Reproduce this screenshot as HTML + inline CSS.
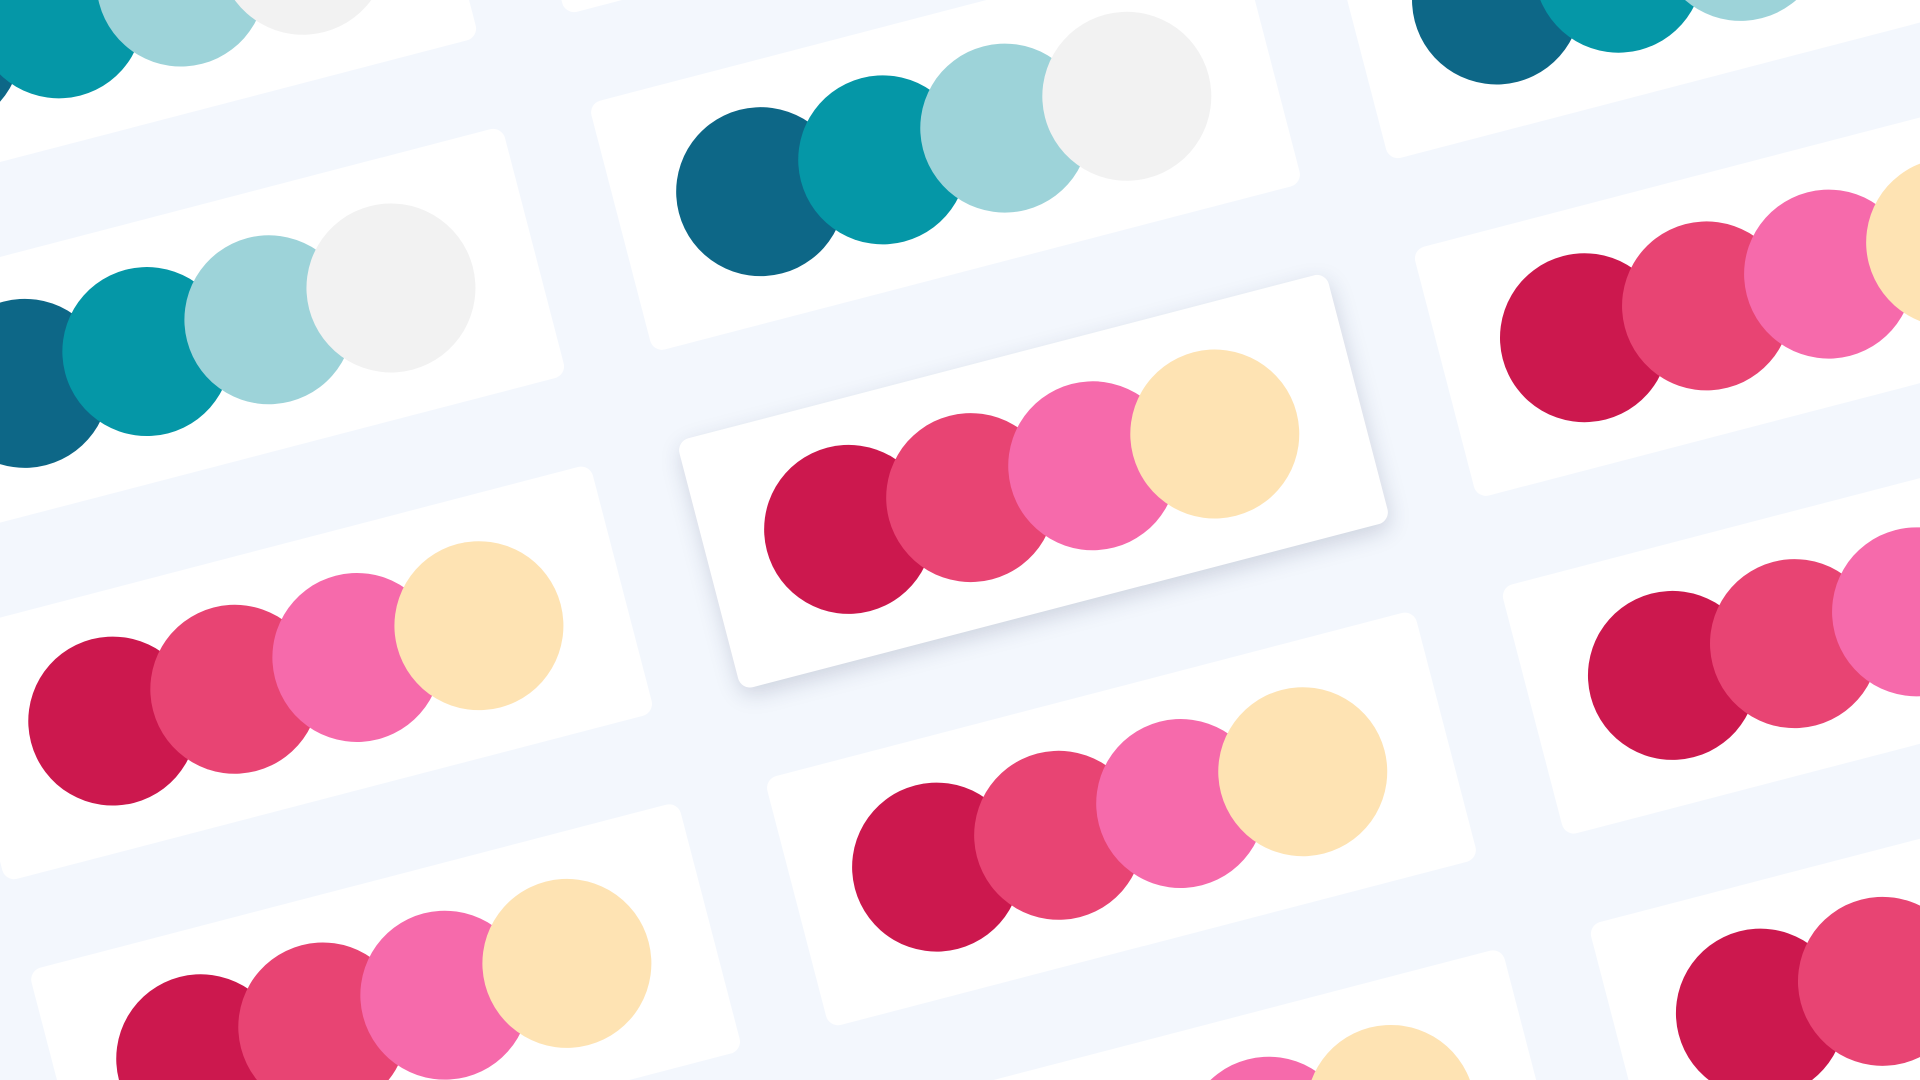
<!DOCTYPE html>
<html><head><style>
html,body{margin:0;padding:0;width:1920px;height:1080px;overflow:hidden;background:#f3f7fd;}
#wrap{position:absolute;left:0;top:0;width:1568px;height:882px;transform:scale(1.2245);transform-origin:0 0;overflow:hidden;background:#f3f7fd;contain:paint;}
#plane{position:absolute;left:844px;top:393px;width:0;height:0;transform:rotate(-14.6deg);}
.card{position:absolute;width:548px;height:210px;background:#fff;border-radius:10px;}
.card.sh{box-shadow:0 6px 18px rgba(40,50,90,0.18);z-index:5;}
.c{position:absolute;top:36px;width:138px;height:138px;border-radius:50%;}
</style></head><body>
<div id="wrap"><div id="plane"></div></div>
<script>
var p=document.getElementById('plane');
var teal=['#0d6787','#0597a7','#9dd3d9','#f2f2f2'];
var pink=['#cc184e','#e84473','#f66aab','#fee3b3'];
var h='';
for(var r=-4;r<=4;r++){for(var c=-4;c<=4;c++){
 var x=c*621-274, y=r*285-105;
 var cols=r<0?teal:pink;
 h+='<div class="card'+(r==0&&c==0?' sh':'')+'" style="left:'+x+'px;top:'+y+'px">';
 for(var i=0;i<4;i++){h+='<div class="c" style="left:'+(49+i*103)+'px;background:'+cols[i]+'"></div>';}
 h+='</div>';
}}
p.innerHTML=h;
</script>
</body></html>
